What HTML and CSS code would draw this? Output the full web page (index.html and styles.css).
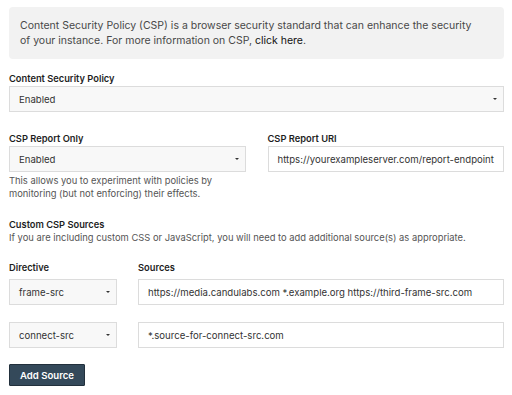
FILE: index.html
```html
<!DOCTYPE html>
<html lang="en">
<head>
  <meta charset="UTF-8">
  <title>CSP Settings</title>
  <link rel="stylesheet" href="styles.css">
</head>
<body>
  <div class="csp-page">
    <div class="info-box">
      Content Security Policy (CSP) is a browser security standard that can enhance the security<br>
      of your instance. For more information on CSP, <a href="#">click here</a>.
    </div>

    <div class="field">
      <label class="field-label">Content Security Policy</label>
      <div class="select-box"><span>Enabled</span><span class="caret"></span></div>
    </div>

    <div class="two-col">
      <div class="field">
        <label class="field-label">CSP Report Only</label>
        <div class="select-box"><span>Enabled</span><span class="caret"></span></div>
        <p class="help">This allows you to experiment with policies by<br>monitoring (but not enforcing) their effects.</p>
      </div>
      <div class="field">
        <label class="field-label">CSP Report URI</label>
        <div class="text-box">https://yourexampleserver.com/report-endpoint</div>
      </div>
    </div>

    <div class="section">
      <div class="field-label">Custom CSP Sources</div>
      <p class="section-desc">If you are including custom CSS or JavaScript, you will need to add additional source(s) as appropriate.</p>
    </div>

    <div class="source-grid">
      <div class="field-label">Directive</div>
      <div class="field-label">Sources</div>

      <div class="select-box"><span>frame-src</span><span class="caret"></span></div>
      <div class="text-box">https://media.candulabs.com *.example.org https://third-frame-src.com</div>

      <div class="select-box"><span>connect-src</span><span class="caret"></span></div>
      <div class="text-box">*.source-for-connect-src.com</div>
    </div>

    <button class="add-btn">Add Source</button>
  </div>
</body>
</html>
```

FILE: styles.css
```css
body {
  margin: 0;
  font-family: Inter, "Liberation Sans", sans-serif;
  color: #3a3a3a;
  background: #fff;
}
.csp-page {
  padding: 7px 8px 0 9px;
}
.info-box {
  background: #f2f2f2;
  border-radius: 4px;
  padding: 11px 11px;
  font-size: 10.5px;
  line-height: 15px;
  color: #484848;
}
.info-box a {
  color: #111;
  text-decoration: none;
}
.field-label {
  display: block;
  font-size: 9.3px;
  font-weight: 600;
  color: #1e1e1e;
  line-height: 12px;
}
.field {
  margin-top: 14px;
}
.field .field-label {
  margin-bottom: 1px;
}
.select-box,
.text-box {
  box-sizing: border-box;
  height: 26px;
  border: 1px solid #dcdcdc;
  font-size: 9.6px;
  display: flex;
  align-items: center;
  padding: 0 9px;
  color: #333;
}
.select-box {
  background: #f8f8f8;
  justify-content: space-between;
  padding-right: 6px;
}
.text-box {
  background: #fff;
  white-space: nowrap;
  overflow: hidden;
}
.caret {
  width: 0;
  height: 0;
  border-left: 2px solid transparent;
  border-right: 2px solid transparent;
  border-top: 2px solid #333;
}
.two-col {
  display: grid;
  grid-template-columns: 1fr 1fr;
  column-gap: 22px;
  margin-top: 21px;
}
.two-col .field {
  margin-top: 0;
}
.help {
  margin: 2px 0 0;
  font-size: 9.4px;
  line-height: 13px;
  color: #555;
}
.section {
  margin-top: 19px;
}
.section-desc {
  margin: 0;
  font-size: 9.4px;
  line-height: 13px;
  color: #555;
}
.source-grid {
  display: grid;
  grid-template-columns: 108px 1fr;
  column-gap: 21px;
  row-gap: 17px;
  margin-top: 18px;
}
.source-grid .field-label:nth-child(-n+2) {
  margin-bottom: -13px;
}
.add-btn {
  margin-top: 16px;
  height: 22px;
  padding: 0 10px;
  border: 1px solid #22303c;
  background: #34495a;
  color: #fff;
  font-family: Inter, "Liberation Sans", sans-serif;
  font-size: 9.6px;
  font-weight: 600;
  border-radius: 1px;
}
```
